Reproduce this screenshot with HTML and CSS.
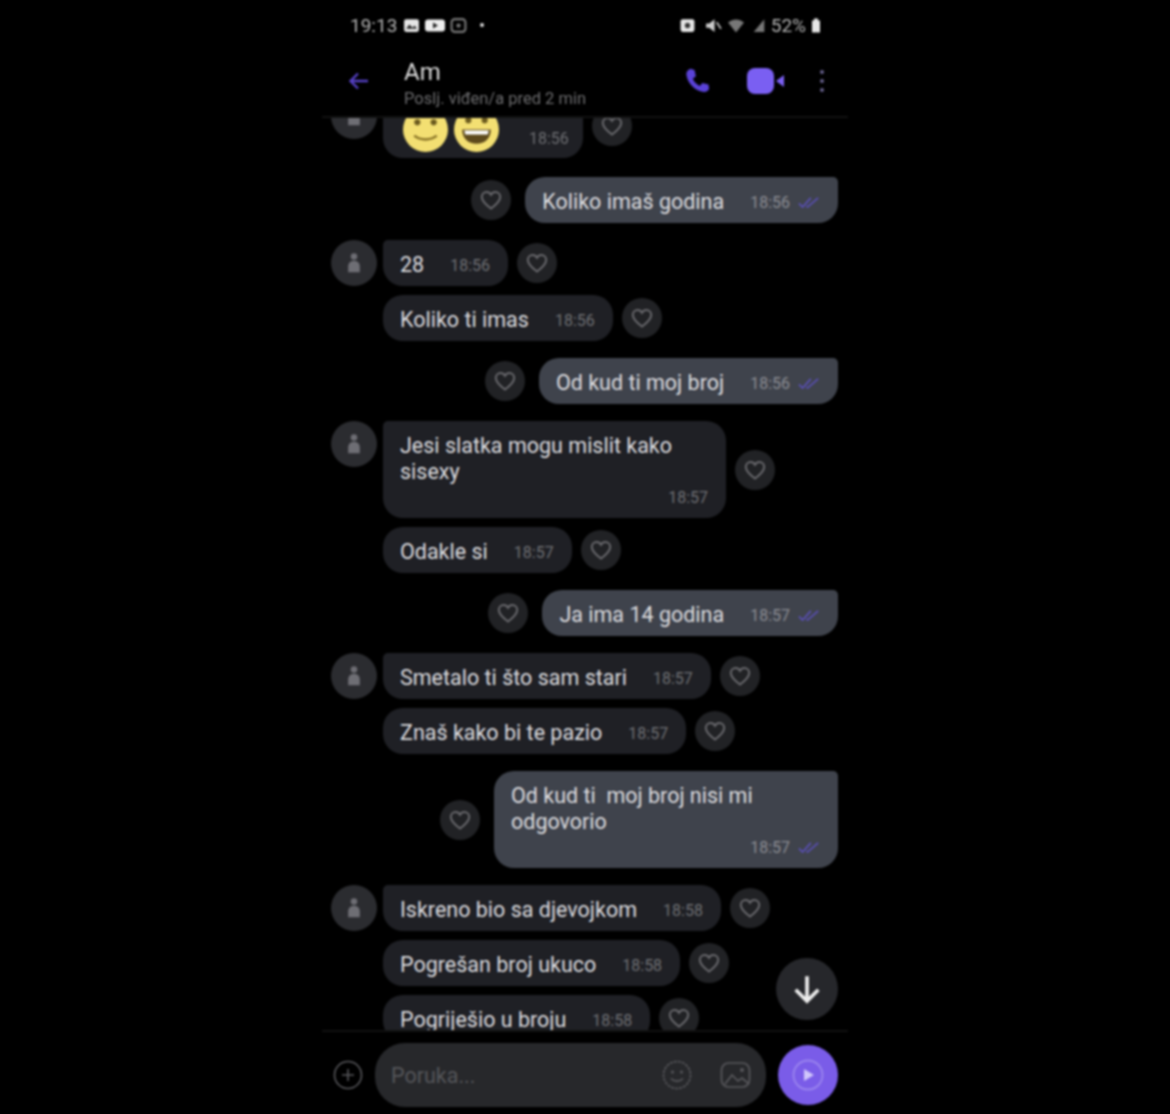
FILE: index.html
```html
<!DOCTYPE html>
<html lang="en">
<head>
    <meta charset="UTF-8">
    <title>Am</title>
    <link rel="stylesheet" href="styles.css">
</head>
<body>
    <svg class="defs" width="0" height="0">
        <symbol id="heart" viewBox="0 0 24 24">
            <path d="M12 20.500C5.500 15.500 2.800 12.600 2.800 8.900 2.800 6 5 4 7.600 4c1.900 0 3.400 1 4.400 2.700C13 5 14.500 4 16.400 4 19 4 21.200 6 21.200 8.900c0 3.700-2.700 6.600-9.200 11.600z" fill="none" stroke="currentColor" stroke-width="2"/>
        </symbol>
        <symbol id="person" viewBox="0 0 24 24">
            <circle cx="12" cy="6.500" r="2.800" fill="currentColor"/>
            <path d="M7 20v-5c0-3 2-5 5-5s5 2 5 5v5z" fill="currentColor"/>
        </symbol>
        <symbol id="ticks" viewBox="0 0 24 14">
            <path d="M1 8l4 4 9-10M9 11l1.500 1L22 2" fill="none" stroke="currentColor" stroke-width="1.800"/>
        </symbol>
    </svg>

    <div class="phone">
        <div class="status">
            <div class="status-left">
                <span class="clock">19:13</span>
                <svg class="st-icon" viewBox="0 0 16 16"><rect x="1" y="2" width="14" height="12" rx="2" fill="#e6e6e6"/><path d="M3 11l3-4 3 3 2-2 2 3z" fill="#222"/></svg>
                <svg class="st-icon wide" viewBox="0 0 20 16"><rect x="0" y="2" width="20" height="12" rx="3" fill="#eee"/><path d="M8 5l5 3-5 3z" fill="#222"/></svg>
                <svg class="st-icon" viewBox="0 0 16 16"><rect x="1.500" y="2" width="13" height="12" rx="3" fill="none" stroke="#777" stroke-width="2"/><circle cx="8" cy="8" r="2" fill="#777"/></svg>
                <i class="st-dot"></i>
            </div>
            <div class="status-right">
                <svg class="st-icon st-first" viewBox="0 0 16 16"><rect x="1.500" y="2" width="13" height="12" rx="2" fill="#e6e6e6"/><circle cx="8" cy="8" r="2.500" fill="#333"/></svg>
                <svg class="st-icon" viewBox="0 0 16 16"><path d="M1 6h3l5-4v12l-5-4H1z" fill="#ccc"/><path d="M11 5l4 6" stroke="#ccc" stroke-width="1.500"/></svg>
                <svg class="st-icon wide" viewBox="0 0 20 16"><path d="M1 5c5-4 11-4 16 0l-8 10z" fill="#777"/></svg>
                <svg class="st-icon signal" viewBox="0 0 12 16"><path d="M11 2v12H1z" fill="#777"/></svg>
                <span>52%</span>
                <svg class="st-icon small" viewBox="0 0 10 16"><path d="M3 1h4v2h2v12H1V3h2z" fill="#e6e6e6"/></svg>
            </div>
        </div>

        <header class="top">
            <svg class="back" viewBox="0 0 24 24"><path d="M21 12H4M11 4.500L3.500 12l7.500 7.500" fill="none" stroke="currentColor" stroke-width="2.400"/></svg>
            <div class="who">
                <div class="name">Am</div>
                <div class="seen">Poslj. viđen/a pred 2 min</div>
            </div>
            <svg class="call" viewBox="0 0 24 24"><path d="M5.500 1.500l3.500 1 1.200 5.500-2.700 2c1.200 2.700 3.200 4.800 6 6.200l2.300-2.500 5.200 1.300.5 3.700c-.5 1.800-2.500 3-4.500 2.800C9 20.500 3 14 2 6.500 1.800 4.300 3.300 2.300 5.500 1.500z" fill="currentColor"/></svg>
            <svg class="video" viewBox="0 0 38 26"><rect x="0" y="0" width="27" height="26" rx="8" fill="currentColor"/><path d="M29 13l8-6v12z" fill="currentColor"/></svg>
            <div class="dots"><i></i><i></i><i></i></div>
        </header>

        <main class="chat">
            <div class="row recv first">
                <div class="avatar"><svg><use href="#person"/></svg></div>
                <div class="bubble emoji-bubble">
                    <svg class="emoji" viewBox="0 0 44 44"><circle cx="22" cy="22" r="22" fill="#f3df72"/><circle cx="14" cy="15" r="3" fill="#6b5a1e"/><circle cx="30" cy="15" r="3" fill="#6b5a1e"/><path d="M11 28c6 5 16 5 22 0" fill="none" stroke="#8a7426" stroke-width="2.500"/></svg>
                    <svg class="emoji" viewBox="0 0 44 44"><circle cx="22" cy="22" r="22" fill="#f3df72"/><circle cx="14" cy="13" r="3" fill="#6b5a1e"/><circle cx="30" cy="13" r="3" fill="#6b5a1e"/><path d="M8 22h28c0 9-6 14-14 14S8 31 8 22z" fill="#5e4a1c"/><path d="M10 23h24l-1 4H11z" fill="#fff"/></svg>
                    <span class="time">18:56</span>
                </div>
                <div class="like"><svg><use href="#heart"/></svg></div>
            </div>

            <div class="row sent">
                <div class="like"><svg><use href="#heart"/></svg></div>
                <div class="bubble"><span class="text">Koliko imaš godina</span><span class="time">18:56</span><svg class="ticks"><use href="#ticks"/></svg></div>
            </div>

            <div class="row recv">
                <div class="avatar"><svg><use href="#person"/></svg></div>
                <div class="bubble"><span class="text">28</span><span class="time">18:56</span></div>
                <div class="like"><svg><use href="#heart"/></svg></div>
            </div>
            <div class="row recv cont">
                <div class="bubble"><span class="text">Koliko ti imas</span><span class="time">18:56</span></div>
                <div class="like"><svg><use href="#heart"/></svg></div>
            </div>

            <div class="row sent">
                <div class="like"><svg><use href="#heart"/></svg></div>
                <div class="bubble"><span class="text">Od kud ti moj broj</span><span class="time">18:56</span><svg class="ticks"><use href="#ticks"/></svg></div>
            </div>

            <div class="row recv">
                <div class="avatar"><svg><use href="#person"/></svg></div>
                <div class="bubble multi multi-recv">
                    <p class="text">Jesi slatka mogu mislit kako sisexy</p>
                    <div class="meta"><span class="time">18:57</span></div>
                </div>
                <div class="like"><svg><use href="#heart"/></svg></div>
            </div>
            <div class="row recv cont">
                <div class="bubble"><span class="text">Odakle si</span><span class="time">18:57</span></div>
                <div class="like"><svg><use href="#heart"/></svg></div>
            </div>

            <div class="row sent">
                <div class="like"><svg><use href="#heart"/></svg></div>
                <div class="bubble"><span class="text">Ja ima 14 godina</span><span class="time">18:57</span><svg class="ticks"><use href="#ticks"/></svg></div>
            </div>

            <div class="row recv">
                <div class="avatar"><svg><use href="#person"/></svg></div>
                <div class="bubble"><span class="text">Smetalo ti što sam stari</span><span class="time">18:57</span></div>
                <div class="like"><svg><use href="#heart"/></svg></div>
            </div>
            <div class="row recv cont">
                <div class="bubble"><span class="text">Znaš kako bi te pazio</span><span class="time">18:57</span></div>
                <div class="like"><svg><use href="#heart"/></svg></div>
            </div>

            <div class="row sent">
                <div class="like"><svg><use href="#heart"/></svg></div>
                <div class="bubble multi multi-sent">
                    <p class="text">Od kud ti&nbsp; moj broj nisi mi odgovorio</p>
                    <div class="meta"><span class="time">18:57</span><svg class="ticks"><use href="#ticks"/></svg></div>
                </div>
            </div>

            <div class="row recv">
                <div class="avatar"><svg><use href="#person"/></svg></div>
                <div class="bubble"><span class="text">Iskreno bio sa djevojkom</span><span class="time">18:58</span></div>
                <div class="like"><svg><use href="#heart"/></svg></div>
            </div>
            <div class="row recv cont">
                <div class="bubble"><span class="text">Pogrešan broj ukuco</span><span class="time">18:58</span></div>
                <div class="like"><svg><use href="#heart"/></svg></div>
            </div>
            <div class="row recv cont">
                <div class="bubble"><span class="text">Pogriješio u broju</span><span class="time">18:58</span></div>
                <div class="like"><svg><use href="#heart"/></svg></div>
            </div>

            <button class="scroll-down">
                <svg viewBox="0 0 24 24"><path d="M12 3v17M4 12.500l8 8 8-8" fill="none" stroke="currentColor" stroke-width="2.600"/></svg>
            </button>
        </main>

        <footer class="composer">
            <svg class="plus" viewBox="0 0 30 30"><circle cx="15" cy="15" r="13.500" fill="none" stroke="currentColor" stroke-width="1.600"/><path d="M15 9v12M9 15h12" stroke="currentColor" stroke-width="1.600"/></svg>
            <div class="input">
                <span class="placeholder">Poruka...</span>
                <svg class="in-icon" viewBox="0 0 30 30"><circle cx="15" cy="15" r="13.500" fill="none" stroke="currentColor" stroke-width="1.600" stroke-dasharray="3 1"/><circle cx="10.500" cy="12" r="1.500" fill="currentColor"/><circle cx="19.500" cy="12" r="1.500" fill="currentColor"/><path d="M9 18.500c3 3.500 9 3.500 12 0" fill="none" stroke="currentColor" stroke-width="1.600"/></svg>
                <svg class="in-icon gallery" viewBox="0 0 34 30"><rect x="1.500" y="3" width="28" height="24" rx="7" fill="none" stroke="currentColor" stroke-width="1.700"/><path d="M5 24l7-9 6 6 4-3 7 6" fill="none" stroke="currentColor" stroke-width="1.700"/><circle cx="22" cy="10" r="2" fill="currentColor"/></svg>
            </div>
            <button class="send">
                <svg viewBox="0 0 34 34"><circle cx="17" cy="17" r="14.500" fill="none" stroke="#9a84ee" stroke-width="1.800"/><path d="M13 11l10 6-10 6z" fill="#d0c6fb"/></svg>
            </button>
        </footer>
    </div>
</body>
</html>
```

FILE: styles.css
```css
* {
    margin: 0;
    padding: 0;
    box-sizing: border-box;
}

body {
    background-color: #000;
    color: #e4e4e6;
    font-family: Roboto, 'Liberation Sans', sans-serif;
}

.defs {
    display: block;
}

.phone {
    width: 526px;
    height: 1114px;
    margin: 0 auto;
    display: flex;
    flex-direction: column;
    filter: blur(1px);
}

/* status bar */
.status {
    height: 50px;
    flex-shrink: 0;
    padding: 0 27px 0 28px;
    display: flex;
    justify-content: space-between;
    align-items: center;
    font-size: 19px;
    color: #b4b4b4;
}

.status-left, .status-right {
    display: flex;
    align-items: center;
    gap: 5px;
}

.clock {
    margin-right: 1px;
}

.st-icon {
    width: 17px;
    height: 17px;
}

.st-icon.wide {
    width: 20px;
}

.st-icon.small {
    width: 10px;
}

.st-icon.signal {
    width: 14px;
}

.st-first {
    margin-right: 4px;
}

.st-dot {
    width: 4px;
    height: 4px;
    margin-left: 8px;
    background-color: #ddd;
    border-radius: 50%;
}

/* header */
.top {
    height: 68px;
    flex-shrink: 0;
    display: flex;
    align-items: center;
    padding: 0 24px 4px 25px;
    border-bottom: 2px solid #111;
}

.back {
    width: 24px;
    height: 24px;
    color: #5540c4;
}

.who {
    flex: 1;
    margin-left: 33px;
    padding-top: 7px;
}

.name {
    font-size: 24px;
    line-height: 28px;
    color: #dcdcdc;
}

.seen {
    font-size: 16.500px;
    line-height: 26px;
    color: #6d6d6f;
}

.call {
    width: 28px;
    height: 28px;
    color: #5a42d8;
}

.video {
    width: 38px;
    height: 26px;
    margin-left: 35px;
    color: #7a5ff2;
}

.dots {
    margin-left: 35px;
    width: 4px;
    display: flex;
    flex-direction: column;
    gap: 5px;
}

.dots i {
    height: 4px;
    background-color: #66608c;
    border-radius: 50%;
}

/* messages */
.chat {
    flex: 1;
    min-height: 0;
    position: relative;
    overflow: hidden;
    padding: 0 10px 0 9px;
}

.row {
    display: flex;
    align-items: center;
    margin-top: 17px;
}

.row.first {
    margin-top: -25px;
    margin-bottom: 19px;
}

.row.cont {
    margin-top: 9px;
    margin-left: 52px;
}

.row.sent {
    justify-content: flex-end;
    gap: 14px;
}

.row.recv {
    gap: 9px;
}

.avatar {
    width: 46px;
    height: 46px;
    flex-shrink: 0;
    margin-right: -3px;
    align-self: flex-start;
    background-color: #2b2c30;
    border-radius: 50%;
    display: flex;
    align-items: center;
    justify-content: center;
    color: #6e6e74;
}

.avatar svg {
    width: 28px;
    height: 28px;
}

.like {
    width: 40px;
    height: 40px;
    flex-shrink: 0;
    background-color: #212225;
    border-radius: 50%;
    display: flex;
    align-items: center;
    justify-content: center;
    color: #68686c;
}

.like svg {
    width: 24px;
    height: 24px;
}

.bubble {
    min-height: 46px;
    padding: 12px 18px 8px 17px;
    display: flex;
    align-items: center;
    flex-shrink: 0;
    background-color: #1f2025;
    border-radius: 20px;
}

.recv:not(.cont) .bubble {
    border-top-left-radius: 5px;
}

.sent .bubble {
    background-color: #3f434c;
    border-top-right-radius: 5px;
}

.text {
    font-size: 21.500px;
    line-height: 26px;
    color: #dedee0;
}

.bubble > span.text {
    white-space: nowrap;
}

.time {
    margin-left: 26px;
    font-size: 16px;
    color: #6f7074;
    white-space: nowrap;
}

.sent .time {
    color: #8c8d93;
}

.ticks {
    width: 22px;
    height: 13px;
    margin-left: 8px;
    color: #5a4fb8;
}

.emoji-bubble {
    width: 200px;
    height: 65px;
    padding: 0 0 6px 20px;
    align-items: flex-end;
    gap: 6px;
}

.emoji-bubble .time {
    margin: 0 0 4px 24px;
}

.emoji {
    width: 45px;
    height: 45px;
    flex-shrink: 0;
}

.bubble.multi {
    display: block;
    padding-top: 12px;
    padding-bottom: 9px;
}

.multi-recv {
    width: 343px;
}

.multi-sent {
    width: 344px;
}

.meta {
    display: flex;
    justify-content: flex-end;
    align-items: center;
    height: 24px;
}

.scroll-down {
    position: absolute;
    right: 10px;
    top: 840px;
    width: 62px;
    height: 62px;
    border: 0;
    border-radius: 50%;
    background-color: #26272b;
    color: #ececec;
    display: flex;
    align-items: center;
    justify-content: center;
}

.scroll-down svg {
    width: 34px;
    height: 34px;
}

/* bottom bar */
.composer {
    height: 84px;
    flex-shrink: 0;
    display: flex;
    align-items: center;
    padding: 4px 10px 0 11px;
    background-color: #000;
    border-top: 2px solid #111;
    color: #58585c;
}

.plus {
    width: 30px;
    height: 30px;
}

.input {
    width: 391px;
    height: 64px;
    margin-left: 12px;
    padding: 0 12px 0 16px;
    display: flex;
    align-items: center;
    background-color: #27282b;
    border-radius: 30px;
}

.placeholder {
    flex: 1;
    font-size: 21.500px;
    color: #55565a;
}

.in-icon {
    width: 30px;
    height: 30px;
}

.in-icon.gallery {
    width: 34px;
    margin-left: 28px;
}

.send {
    width: 60px;
    height: 60px;
    margin-left: 12px;
    border: 0;
    border-radius: 50%;
    background-color: #7a5ce8;
    display: flex;
    align-items: center;
    justify-content: center;
}

.send svg {
    width: 34px;
    height: 34px;
}
```
